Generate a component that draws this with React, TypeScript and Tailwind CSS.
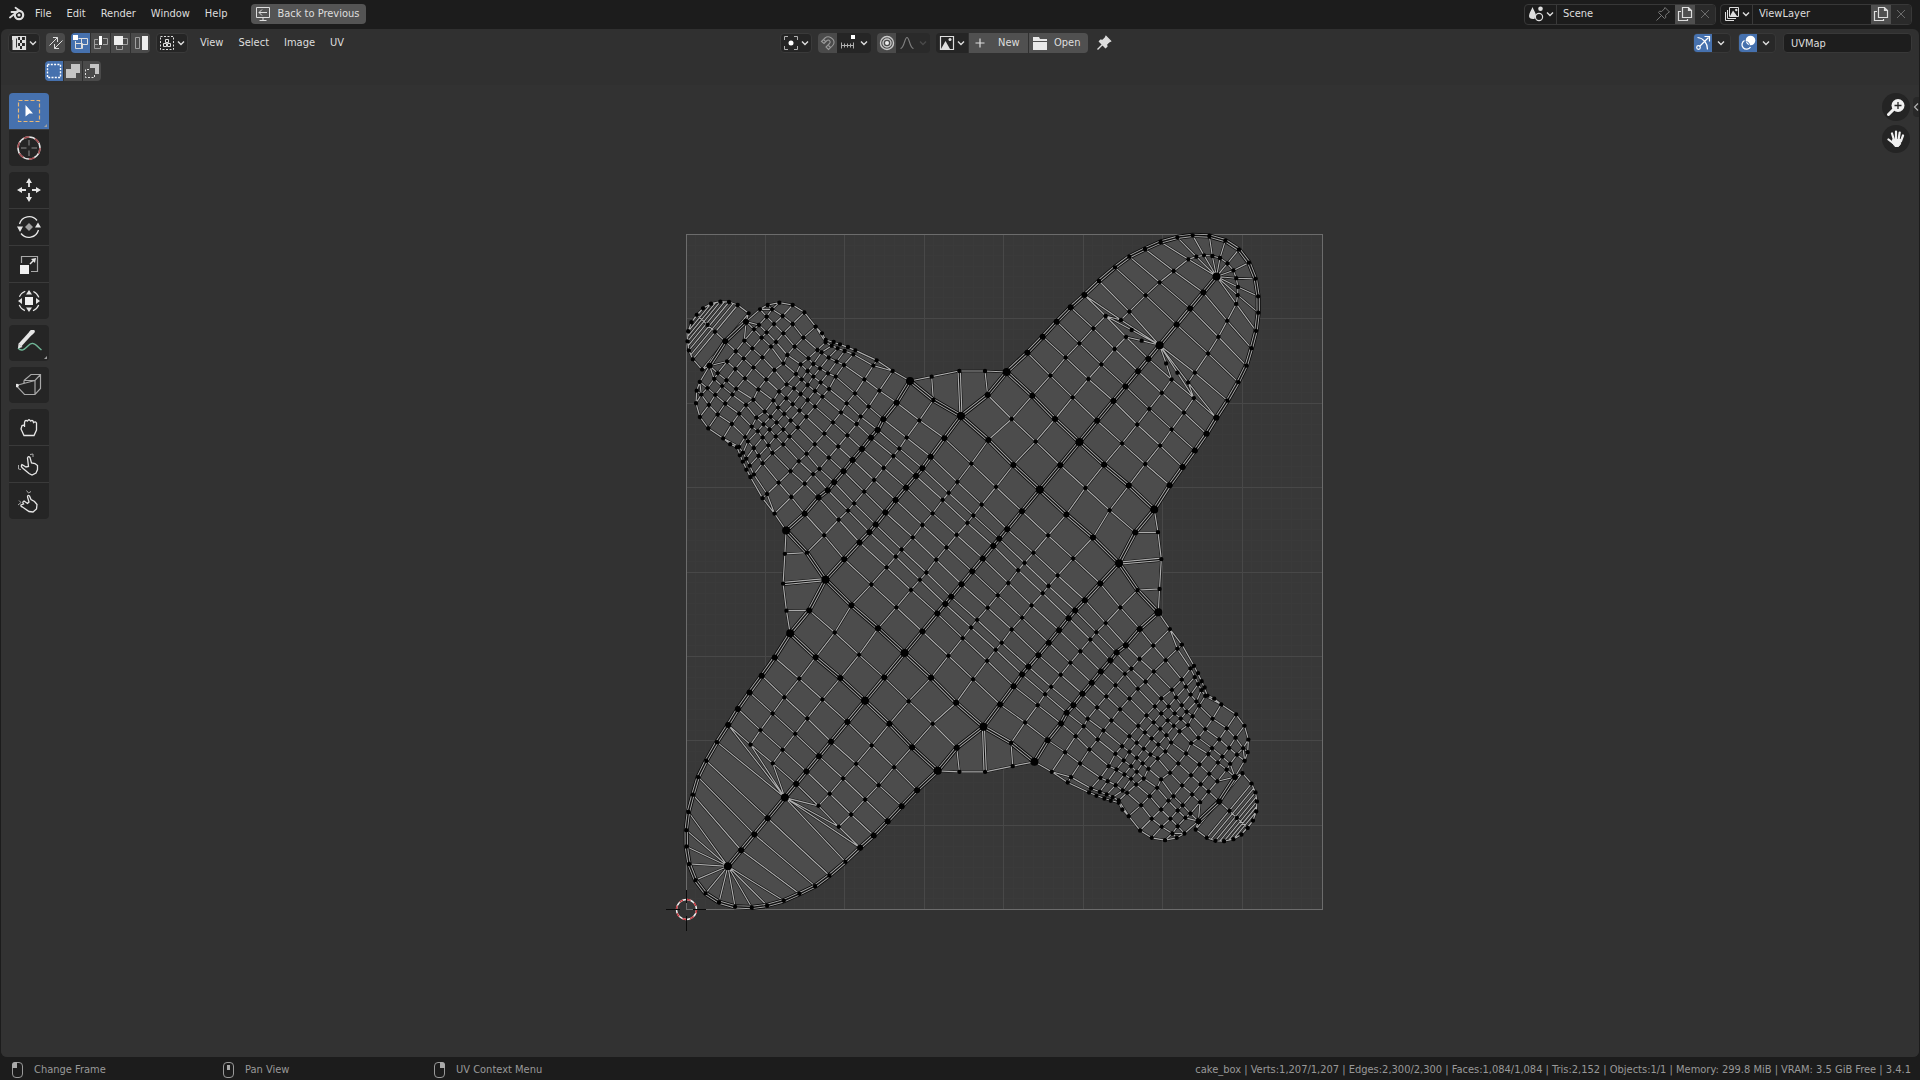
import type { ReactNode } from "react";

type Point = [number, number];

/* ---------- UV mesh ---------- */

// The layout mirrors around two skewed axes, so only one quarter is listed.
const CENTER: Point = [906.6, 1054.2];
const AXIS_A: Point = [-372, -346.5];
const AXIS_B: Point = [372, -449];

// columns running across the short arm, from the center out to the ear
const columns: Point[][] = [
  [[906, 1054], [941, 1018], [970, 978], [988, 957], [1012, 928], [1056, 874], [1108, 808]],
  [[829, 983], [860, 945], [892, 909], [910, 886], [935, 854], [978, 801], [1030, 735]],
  [[757, 915], [788, 880], [818, 840], [836, 819], [862, 786], [904, 731], [955, 660]],
  [[677, 840], [708, 803], [738, 768], [757, 745], [782, 710], [823, 655], [873, 588]],
  [[612, 780], [641, 744], [670, 708], [688, 686], [710, 653], [748, 601], [790, 540]],
  [[548, 720], [576, 687], [603, 653], [623, 630], [640, 598], [680, 548], [720, 483]],
  [[504, 680], [532, 646], [560, 612], [572, 590], [596, 560], [628, 512], [668, 453]],
  [[463, 641], [489, 607], [513, 577], [530, 550], [555, 520], [583, 478], [610, 437]],
  [[408, 591], [435, 560], [457, 530], [477, 507], [497, 470], [522, 435], [550, 403]],
  [[388, 572], [413, 540], [435, 513], [452, 487], [474, 460], [500, 425], [524, 393]],
  [[368, 553], [392, 522], [413, 495], [430, 470], [450, 445], [476, 413], [503, 385]],
  [[348, 535], [372, 505], [395, 478], [413, 453], [430, 432], [455, 397], [485, 377]],
  [[326, 516], [350, 493], [378, 462], [392, 433], [415, 415], [442, 390], [467, 367]],
  [[288, 479], [313, 450], [340, 430], [352, 405], [374, 380], [400, 353], [437, 320]],
  [[250, 443], [277, 412], [303, 380], [318, 366], [340, 340], [368, 312], [403, 277]],
  [[221, 416], [247, 385], [275, 353], [290, 337], [312, 312], [338, 288], [368, 255]],
  [[198, 393], [223, 362], [252, 328], [267, 315], [290, 290], [306, 268], [328, 248]],
];

// rows of the long arm, from its axis to its outer edge
const armRows: Point[][] = [
  [[1108, 808], [1030, 735], [955, 660], [873, 588]],
  [[1170, 735], [1097, 665], [1025, 597], [953, 525]],
  [[1227, 665], [1155, 597], [1087, 527], [1010, 456]],
  [[1281, 602], [1208, 532], [1141, 467], [1072, 398]],
  [[1330, 543], [1255, 477], [1187, 413], [1118, 350]],
  [[1365, 498], [1294, 433], [1228, 370], [1160, 305]],
  [[1403, 453], [1334, 387], [1270, 325], [1202, 262]],
  [[1433, 415], [1368, 351], [1307, 288], [1243, 225]],
];

const earHub: Point = [228, 305];
const earEdge: Point[] = [[236, 280], [203, 255], [177, 246], [151, 245], [123, 251], [99, 265], [80, 285]];
const earMids: Point[] = [[190, 250], [164, 245], [137, 248]];
const earAxis: Point[] = [[198, 393], [165, 365], [135, 335], [110, 318], [80, 285]];

const armHub: Point = [1468, 375];
const armTip: Point = [1638, 168];
const armAxis: Point[] = [armHub, [1518, 312], [1560, 265], [1597, 215], armTip];
const armOuter: Point[] = [
  [1287, 183], [1335, 142], [1378, 110], [1425, 87], [1472, 66], [1522, 52], [1568, 46], [1618, 48], [1666, 62],
  [1705, 87],
];
const armRing: Point[] = [
  [1378, 275], [1427, 226], [1469, 187], [1511, 153], [1555, 118], [1579, 110], [1602, 106], [1627, 108],
  [1650, 114], [1670, 128],
];
const armFan: Point[] = [[1353, 300], [1385, 330], [1415, 362]];
const web: Point[] = [[720, 483], [785, 470], [868, 453], [945, 453], [1010, 456]];

// points this close to an axis belong on it
const snap = (n: number) => (Math.abs(n) < 0.03 ? 0 : n);

const mirror = ([x, y]: Point, flipA: boolean, flipB: boolean): Point => {
  const dx = x - CENTER[0];
  const dy = y - CENTER[1];
  const det = AXIS_A[0] * AXIS_B[1] - AXIS_B[0] * AXIS_A[1];
  const s = snap((dx * AXIS_B[1] - AXIS_B[0] * dy) / det) * (flipA ? -1 : 1);
  const t = snap((AXIS_A[0] * dy - dx * AXIS_A[1]) / det) * (flipB ? -1 : 1);
  return [
    CENTER[0] + s * AXIS_A[0] + t * AXIS_B[0],
    CENTER[1] + s * AXIS_A[1] + t * AXIS_B[1],
  ];
};

const toPath = (points: Point[]) => "M" + points.map(([x, y]) => `${x.toFixed(1)} ${y.toFixed(1)}`).join("L");

const last = <T,>(list: T[]) => list[list.length - 1];

const buildMesh = () => {
  const edges: string[] = [];
  const seams: string[] = [];
  const dots: string[] = [];
  const bigDots: string[] = [];
  const faces: string[] = [];

  for (const flipA of [false, true]) {
    for (const flipB of [false, true]) {
      const m = (p: Point) => mirror(p, flipA, flipB);
      const edge = (...p: Point[]) => edges.push(toPath(p.map(m)));
      const seam = (...p: Point[]) => seams.push(toPath(p.map(m)));
      const dot = (...p: Point[]) => p.forEach((q) => dots.push(toPath([m(q)]) + "h.1"));
      const big = (...p: Point[]) => p.forEach((q) => bigDots.push(toPath([m(q)]) + "h.1"));

      // short arm
      columns.forEach((col, i) => {
        if (i === 0 || i === 3 || i === 5) {
          seam(...col);
          big(...col);
        } else {
          edge(...col);
          dot(...col);
        }
      });
      for (let t = 0; t < 7; t++) {
        edge(...columns.map((col) => col[t]));
      }
      seam(...columns.slice(0, 4).map((col) => col[6]));
      seam(columns[3][6], columns[4][6], columns[5][6]);
      edge([610, 437], [620, 421], [668, 453]);
      edge([620, 421], [556, 391], [510, 373], [467, 360], [456, 340], [437, 320]);
      dot([620, 421], [556, 391], [534, 381], [510, 373], [491, 366], [467, 360], [456, 340]);

      // ear
      edge([223, 362], earHub, [252, 328]);
      edge(earHub, [267, 315]);
      edge([328, 248], [293, 255], [270, 268], earHub, earEdge[0]);
      edge([290, 290], [270, 268], [306, 268], [338, 288]);
      edge([293, 255], [306, 268]);
      dot([293, 255], [270, 268]);
      edge(...earEdge);
      edge(...earAxis);
      dot(...earEdge, ...earAxis.slice(2));
      big(earHub, earAxis[1]);
      seam(earHub, earAxis[1]);
      [...earEdge.slice(0, -1), ...earMids].forEach((p) => edge(p, mirror(p, false, true)));

      // web between the arms
      edge(...web);
      edge([785, 470], [790, 540]);
      edge([864, 453], [870, 588]);
      edge([871, 453], [876, 588]);
      edge([945, 453], [953, 525]);
      dot(...web.slice(1, 4));
      big(web[0], web[4]);

      // long arm
      armRows.forEach((row, i) => {
        if (i === 0 || i === 2) {
          seam(...row);
          big(...row);
        } else {
          edge(...row);
          dot(...row);
          big(row[0], row[3]);
        }
      });
      for (let s = 1; s < 3; s++) edge(...armRows.map((row) => row[s]));
      seam(...armRows.map((row) => row[0]), ...armAxis);
      seam(...armRows.slice(0, 3).map((row) => row[3]));
      const tipEdge = [...armRows.slice(2).map((row) => row[3]), ...armOuter];
      seam(...tipEdge);
      dot(...armOuter);
      big(...armAxis.slice(1));

      const [, near, far, outer] = last(armRows);
      if (!flipB) {
        edge(outer, armFan[0], armHub);
        edge(far, armFan[1], armHub);
        edge(near, armFan[2], armHub);
        edge(far, armFan[0]);
        edge(armOuter[0], armRing[0], armHub);
        edge(armFan[0], ...armRing);
        armRing.forEach((p, i) => {
          edge(p, armOuter[i]);
          edge(p, i < 4 ? armAxis[i] : armTip);
        });
        dot(...armFan, ...armRing);
      } else {
        edge(outer, armHub, far);
        edge(near, armHub);
        armOuter.forEach((p, i) => edge(p, i < 4 ? armAxis[i] : armTip));
      }

      const outline: Point[] = [
        CENTER,
        ...[...earEdge].reverse(),
        earHub,
        [270, 268],
        [293, 255],
        [328, 248],
        [368, 255],
        [403, 277],
        [437, 320],
        [467, 360],
        [620, 421],
        ...web,
        ...tipEdge,
      ];
      faces.push(toPath(outline.map(m)) + "Z");
    }
  }

  const hubs = [armHub, armTip, armRows[0][0], armRows[2][0], armRows[0][3], armRows[2][3], web[0]];
  const hubDots = [false, true].flatMap((a) =>
    [false, true].flatMap((b) => hubs.map((p) => toPath([mirror(p, a, b)]) + "h.1")),
  );

  return {
    edges: edges.join(""),
    seams: seams.join(""),
    dots: dots.join(""),
    bigDots: bigDots.join(""),
    hubDots: hubDots.join(""),
    faces: faces.join(""),
  };
};

const mesh = buildMesh();

const gridLines = (count: number) =>
  Array.from({ length: count - 1 }, (_, i) => {
    const x = 685 + Math.round(((i + 1) * 636) / count);
    const y = 234 + Math.round(((i + 1) * 675) / count);
    return `M${x}.5 234V909M686 ${y}.5H1322`;
  }).join("");

const UvCanvas = () => (
  <svg
    viewBox="1 85 1918 972"
    className="absolute inset-0 w-full h-full"
    role="img"
    aria-label="UV layout of cake_box"
    fill="none"
  >
    <rect x="686" y="234" width="636" height="675" fill="#383838" />
    <path d={gridLines(64)} stroke="#3a3a3a" />
    <path d={gridLines(8)} stroke="#484848" />
    <rect x="686.5" y="234.5" width="636" height="675" stroke="#6c6c6c" />
    <g transform="translate(670 220) scale(0.33333)" strokeLinejoin="round">
      <path d={mesh.faces} fill="#4c4c4c" stroke="#4c4c4c" strokeWidth="2" />
      <path d={mesh.edges} stroke="#0c0c0c" strokeWidth="7" />
      <path d={mesh.edges} stroke="#acacac" strokeWidth="3.6" />
      <path d={mesh.seams} stroke="#080808" strokeWidth="15" />
      <path d={mesh.seams} stroke="#a8a8a8" strokeWidth="10" />
      <path d={mesh.seams} stroke="#101010" strokeWidth="4.4" />
      <g stroke="#020202" strokeLinecap="round">
        <path d={mesh.dots} strokeWidth="13" />
        <path d={mesh.bigDots} strokeWidth="18" />
        <path d={mesh.hubDots} strokeWidth="24" />
      </g>
    </g>
    <circle cx="686.5" cy="909.5" r="10" stroke="#f0f0f0" strokeWidth="1.4" />
    <circle cx="686.5" cy="909.5" r="10" stroke="#c8343c" strokeWidth="1.4" strokeDasharray="3.93 3.93" />
    <path d="M666 909.5H680M693 909.5H706M686.5 890V903M686.5 916V931" stroke="#0a0a0a" />
  </svg>
);

/* ---------- icons ---------- */

const Icon = ({ children }: { children: ReactNode }) => (
  <svg viewBox="0 0 16 16" fill="none" stroke="currentColor" className="size-4 shrink-0" aria-hidden="true">
    {children}
  </svg>
);

const Chevron = () => (
  <svg viewBox="0 0 8 8" fill="none" stroke="currentColor" strokeWidth="1.4" className="size-2 shrink-0" aria-hidden="true">
    <path d="M1 2.5 4 5.5 7 2.5" />
  </svg>
);

const BlenderIcon = () => (
  <Icon>
    <circle cx="10" cy="9" r="4.2" strokeWidth="2.2" />
    <circle cx="10" cy="9" r="1.6" fill="currentColor" stroke="none" />
    <path d="M1 11.5 9 5.2M2.5 6H8.5M6.5 1.8 11.5 5.2" strokeWidth="1.8" strokeLinecap="round" />
  </Icon>
);

const BackIcon = () => (
  <Icon>
    <path d="M1.5 1.5H14.5V11.5H1.5ZM8 11.5V14M4.5 14.5H11.5M4 6.5H12M7 3.5 4 6.5 7 9.5" />
  </Icon>
);

const UvEditorIcon = () => (
  <Icon>
    <path d="M1 1H7V3.5H5V12.5H7V15H1.5V5H1Z" fill="currentColor" stroke="none" />
    <path d="M6.5 1.5H14.5V14.5H6.5Z" strokeWidth="1.2" />
    <path
      d="M9 2H11V5H9ZM11 5H14V8H11ZM7 5H9V8H7ZM9 8H11V11H9ZM11 11H14V14H11ZM7 11H9V14H7Z"
      fill="currentColor"
      stroke="none"
    />
  </Icon>
);

const SyncIcon = () => (
  <Icon>
    <path d="M1.5 10.5 9.5 2.5M5 2.5H9.5V7M14.5 5.5 6.5 13.5M6.5 9V13.5H11" />
  </Icon>
);

const VertexIcon = () => (
  <Icon>
    <path d="M5.5 3.5H14.5V9.5H9.5M8.5 3.5V13.5H2.5V6M2.5 8.5H9.5V13.5H8.5" />
    <path d="M0 0H5V5H0Z" fill="#fff" stroke="none" />
  </Icon>
);

const EdgeIcon = () => (
  <Icon>
    <path d="M5 4.5H1.5V13.5H7.5V11M10 3.5H14.5V9.5H10M1.5 9.5H5" stroke="#a0a0a0" />
    <path d="M6 1H9V10H6Z" fill="#fff" stroke="none" />
  </Icon>
);

const FaceIcon = () => (
  <Icon>
    <path d="M10 3.5H14.5V9.5H10M3.5 11V14.5H9.5V11" stroke="#a0a0a0" />
    <path d="M1 1H10V10H1Z" fill="#eee" stroke="none" />
  </Icon>
);

const IslandIcon = () => (
  <Icon>
    <path d="M2.5 2.5H6.5V13.5H2.5Z" stroke="#a0a0a0" />
    <path d="M9 1H15V15H9Z" fill="#eee" stroke="none" />
  </Icon>
);

const StickyIcon = () => (
  <Icon>
    <path d="M1.5 1.5H14.5V14.5H1.5Z" strokeDasharray="2 1.5" />
    <path d="M6.5 4.5H9.5V7.5H6.5ZM4.5 8.5H7.5V11.5H4.5ZM8.5 8.5H11.5V11.5H8.5Z" />
  </Icon>
);

const NewSetIcon = () => (
  <Icon>
    <path d="M1.5 1.5H14.5V14.5H1.5Z" stroke="#fff" strokeWidth="1.4" strokeDasharray="2 1.3" />
  </Icon>
);

const ExtendIcon = () => (
  <Icon>
    <path d="M6 1H15V10H11V15H1V6H6Z" fill="#c4c4c4" stroke="none" />
  </Icon>
);

const SubtractIcon = () => (
  <Icon>
    <path d="M6 1H15V11H11V5H6Z" fill="#c4c4c4" stroke="none" />
    <path d="M5 6.5H1.5V14.5H10.5V11" strokeDasharray="2 1.5" />
  </Icon>
);

const PivotIcon = () => (
  <Icon>
    <path d="M5 1.5H1.5V5M11 1.5H14.5V5M5 14.5H1.5V11M11 14.5H14.5V11" stroke="#b0b0b0" />
    <circle cx="8" cy="8" r="2.5" fill="#fff" stroke="none" />
  </Icon>
);

const MagnetIcon = () => (
  <Icon>
    <path
      d="M1.5 6.5 5 3C8.500 0 14.500 3.500 14 8 13.500 10.500 11 12.500 8.500 14.500L6 12 9.500 8.500C11.500 6.500 8.500 4 7 5.500L4 8.500ZM3.500 4.500 6 7M8 10 10.500 12.500"
      stroke="#999"
      strokeWidth="1.1"
    />
  </Icon>
);

const IncrementIcon = () => (
  <Icon>
    <path
      d="M1 10.5H13M1.5 7.5V13.5M4.5 8.5V12.5M7.5 8.5V12.5M10.5 8.5V12.5M13.5 7.5V13.5"
      stroke="#b0b0b0"
    />
    <path d="M11 0H15V4H11Z" fill="#fff" stroke="none" />
  </Icon>
);

const ProportionalIcon = () => (
  <Icon>
    <circle cx="8" cy="8" r="6.5" stroke="#c8c8c8" strokeWidth="1.4" />
    <circle cx="8" cy="8" r="4" stroke="#c8c8c8" strokeWidth="1.4" />
    <circle cx="8" cy="8" r="2" fill="#eee" stroke="none" />
  </Icon>
);

const FalloffIcon = () => (
  <Icon>
    <path d="M1.5 13.5C5.5 13 5.5 2.5 8 2.5S10.5 13 14.5 13.5" stroke="#808080" strokeWidth="1.2" />
  </Icon>
);

const ImageIcon = () => (
  <Icon>
    <path d="M1.5 1.5H14.5V14.5H1.5Z" strokeWidth="1.2" />
    <path d="M2 14 6.5 6 11 14Z" fill="currentColor" stroke="none" />
    <circle cx="11" cy="4.5" r="1.5" fill="currentColor" stroke="none" />
  </Icon>
);

const PlusIcon = () => (
  <Icon>
    <path d="M8 3.5V12.5M3.5 8H12.5" strokeWidth="1.2" />
  </Icon>
);

const FolderIcon = () => (
  <Icon>
    <path d="M1 2H7L8 4H15V6H1ZM1 7H15V15H1Z" fill="#e8e8e8" stroke="none" />
  </Icon>
);

const PinIcon = ({ filled = false }: { filled?: boolean }) => (
  <Icon>
    <path
      d="M10 1.5 14.5 6 13 6.8 10.5 9.3 10.8 11.5 9.5 12.5 3.5 6.5 4.5 5.2 6.7 5.5 9.2 3ZM6 10 1.5 14.5"
      fill={filled ? "currentColor" : "none"}
      strokeWidth={filled ? 1.4 : 1}
    />
  </Icon>
);

const SceneIcon = () => (
  <Icon>
    <path
      d="M4.5 1C5.5 4 8 7 8 10 7 11 6.5 12 6.5 13 3 13.5 1 12 1 10 1 7 3.5 4 4.5 1Z"
      fill="currentColor"
      stroke="none"
    />
    <circle cx="12.5" cy="2.8" r="2.3" fill="currentColor" stroke="none" />
    <circle cx="11" cy="11" r="3.6" strokeWidth="1.2" />
  </Icon>
);

const LayersIcon = () => (
  <Icon>
    <path d="M1.5 6V14.5H10M3.5 4V12.5H12M5.5 1.5H14.5V10.5H5.5Z" />
    <path d="M6 10 9 4.5 13 10Z" fill="currentColor" stroke="none" />
    <circle cx="12.3" cy="4" r="1.2" fill="currentColor" stroke="none" />
  </Icon>
);

const DuplicateIcon = () => (
  <Icon>
    <path
      d="M5.5 1.5H11.5L14.5 4.5V11.5H5.5ZM11.5 1.5V4.5H14.5M4 5.5H1.5V14.5H10.5V13"
      strokeWidth="1.2"
    />
  </Icon>
);

const CloseIcon = () => (
  <Icon>
    <path d="M4 4 12 12M12 4 4 12" stroke="#6c6c6c" />
  </Icon>
);

const GizmoIcon = () => (
  <Icon>
    <path
      d="M2.5 2.5C8.5 3 12.5 8 12.5 14.5M4.5 11.5 13.5 2.5M9.5 1.5H14.5V6.5"
      stroke="#fff"
      strokeWidth="1.2"
    />
    <circle cx="3.5" cy="12.5" r="1.8" stroke="#fff" strokeWidth="1.2" />
  </Icon>
);

const OverlayIcon = () => (
  <Icon>
    <circle cx="10.5" cy="5.5" r="4.8" fill="#fff" stroke="none" />
    <path d="M4.500 5.500A4.600 4.600 0 1 0 10.500 12" stroke="#fff" strokeWidth="1.3" />
    <path d="M6.500 6.500A4 4 0 0 1 9.500 10" stroke="#4671ae" />
  </Icon>
);

const MouseIcon = ({ pressed }: { pressed: "left" | "middle" | "right" }) => (
  <svg viewBox="0 0 11 16" className="w-[11px] h-4 shrink-0" fill="none" stroke="#999" aria-hidden="true">
    <rect x=".5" y=".5" width="10" height="15" rx="3.5" />
    {pressed === "left" && <path d="M0 6V3Q0 0 3 0H5V6Z" fill="#aaa" stroke="none" />}
    {pressed === "middle" && <path d="M4 3H7V8H4Z" fill="#aaa" stroke="none" />}
    {pressed === "right" && <path d="M11 6V3Q11 0 8 0H6V6Z" fill="#aaa" stroke="none" />}
  </svg>
);

/* ---------- toolbar ---------- */

const toolIcon = (children: ReactNode) => (
  <svg viewBox="0 0 26 26" fill="none" stroke="#e6e6e6" className="size-[26px]" aria-hidden="true">
    {children}
  </svg>
);

const toolGroups = [
  [
    {
      name: "Select Box",
      active: true,
      more: true,
      icon: toolIcon(
        <>
          <path d="M2.5 2.5H23.5V23.5H2.5Z" stroke="#e8b878" strokeDasharray="4 2" strokeWidth="1.2" />
          <path d="M9.5 7 17 15.5 13.3 15.5 9.5 18.5Z" fill="#fff" stroke="none" />
        </>,
      ),
    },
    {
      name: "Cursor",
      icon: toolIcon(
        <>
          <circle cx="13" cy="13" r="11" strokeWidth="1.5" />
          <circle cx="13" cy="13" r="11" stroke="#a0484c" strokeWidth="1.5" strokeDasharray="5.76 5.76" />
          <path d="M13 5V10.5M13 15.5V21M5 13H10.5M15.5 13H21" stroke="#8c8c8c" />
        </>,
      ),
    },
  ],
  [
    {
      name: "Move",
      icon: toolIcon(
        <>
          <path d="M13 6V10M13 16V20M6 13H10M16 13H20" strokeWidth="1.8" />
          <path d="M13 1 16 6H10ZM13 25 16 20H10ZM1 13 6 10V16ZM25 13 20 10V16Z" fill="#e6e6e6" stroke="none" />
        </>,
      ),
    },
    {
      name: "Rotate",
      icon: toolIcon(
        <>
          <path d="M3.5 10A10 10 0 0 1 21 6.5M22.5 16A10 10 0 0 1 5 19.5" strokeWidth="1.3" />
          <path d="M4 18 1 12.5H7ZM22 8.5 25 13.5H19Z" fill="#e6e6e6" stroke="none" />
          <path d="M13 9 17 13 13 17 9 13Z" fill="#a0a0a0" stroke="none" />
        </>,
      ),
    },
    {
      name: "Scale",
      icon: toolIcon(
        <>
          <path d="M5.5 12V5.5H21.5V20.5H15" stroke="#a8a8a8" strokeWidth="1.2" />
          <path d="M14 13 18 9" strokeWidth="1.4" />
          <path d="M20 7 19 12 15 8Z" fill="#e6e6e6" stroke="none" />
          <path d="M4 14H13V23H4Z" fill="#f0f0f0" stroke="none" />
        </>,
      ),
    },
    {
      name: "Transform",
      icon: toolIcon(
        <>
          <circle cx="13" cy="13" r="10.5" strokeWidth="1.2" strokeDasharray="8.25 8.25" strokeDashoffset="-4.1" />
          <path d="M9 9H17V17H9Z" fill="#f0f0f0" stroke="none" />
          <path d="M13 2 16 6.5H10ZM13 24 16 19.5H10ZM2 13 6 10V16ZM24 13 20 10V16Z" fill="#e6e6e6" stroke="none" />
        </>,
      ),
    },
  ],
  [
    {
      name: "Annotate",
      more: true,
      icon: toolIcon(
        <>
          <path d="M2 18C8 25 12 12 17 13.5 20 14 22 17 25.5 20" stroke="#6fb596" strokeWidth="1.4" />
          <path d="M4 15 14 4" strokeWidth="4" />
          <path d="M15 3 16.5 1.5" strokeWidth="4.5" strokeLinecap="round" />
          <path d="M2 18.5 2.5 13.5 6.5 17Z" fill="#e6e6e6" stroke="none" />
        </>,
      ),
    },
  ],
  [
    {
      name: "Rip Region",
      icon: toolIcon(
        <>
          <path
            d="M8 8.5 15 2.5H24.5V16.5L19 22.5H8.5L0 13.5 19 8.5V22.5M8 8.5H19L24.5 2.5M8 8.5V11"
            stroke="#a8a8a8"
            strokeWidth="1.2"
          />
          <circle cx="1" cy="13.5" r="1.8" fill="#e6e6e6" stroke="none" />
        </>,
      ),
    },
  ],
  [
    {
      name: "Grab",
      icon: toolIcon(
        <path
          d="M8 21.5H18L20.5 16V9Q19.5 7 17.5 8.5 17 5.5 14.5 7 13 4.5 11.5 7 9 5.5 8.5 8.5V11L6 11.5 5 15ZM8.5 8.5V13"
          strokeWidth="1.3"
        />,
      ),
    },
    {
      name: "Relax",
      icon: toolIcon(
        <>
          <path
            d="M6 13.5Q4.500 15.500 6.500 17L13 22.500 16 24 20 22 21.500 18.500V14.500L19 12.500 15.500 12 14 6.500Q12.500 4.500 11.500 7L12.500 15.500 10 16Z"
            strokeWidth="1.3"
          />
          <path d="M14 3.5 17 3V6M2.5 14V18L5 18.5" stroke="#a8a8a8" />
        </>,
      ),
    },
    {
      name: "Pinch",
      icon: toolIcon(
        <>
          <path
            d="M8 13Q6 14 7.500 16L5 17Q4.500 18.500 6.500 19L13 23.500 17 24 20.500 21 21 16.500 18.500 13.500 15 11.500 13.500 8Q11.500 6.500 11.500 9L13 14 11.500 15.500Z"
            strokeWidth="1.3"
          />
          <path d="M10.5 2.5 12.5 5 15 3.5M3 12.5 5 14.5 2 17" stroke="#a8a8a8" />
        </>,
      ),
    },
  ],
];

const Toolbar = () => (
  <div className="flex flex-col gap-1.5 p-2">
    {toolGroups.map((group, i) => (
      <div key={i} className="flex flex-col gap-px w-10 rounded-sm overflow-hidden bg-[#3a3a3a]">
        {group.map((tool: { name: string; icon: ReactNode; active?: boolean; more?: boolean }) => (
          <button
            key={tool.name}
            title={tool.name}
            aria-label={tool.name}
            className={`relative h-9 flex items-center justify-center ${tool.active ? "bg-[#4671ae]" : "bg-[#252525]"}`}
          >
            {tool.icon}
            {tool.more && (
              <svg viewBox="0 0 3 3" className="absolute right-0.5 bottom-0.5 size-[3px]" aria-hidden="true">
                <path d="M3 0V3H0Z" fill="#a0a0a0" />
              </svg>
            )}
          </button>
        ))}
      </div>
    ))}
  </div>
);

/* ---------- bars ---------- */

const dropdown = "h-5 flex items-center gap-0.5 px-0.5 rounded-sm bg-[#252525] border border-[#3a3a3a]";
const cell = "h-5 flex items-center justify-center w-[19px] bg-[#4a4a4a]";
const darkCell = "h-full flex items-center gap-0.5 pl-[3px] pr-0.5 border-r border-[#3a3a3a]";

const DataBlock = ({ label, icon, pinned }: { label: string; icon: ReactNode; pinned?: boolean }) => (
  <div className="h-[21px] w-48 flex items-center rounded-sm overflow-hidden bg-[#1c1c1c] border border-[#383838]">
    <button className={darkCell} aria-label={`Browse ${label}`}>
      {icon}
      <Chevron />
    </button>
    <input aria-label={label} defaultValue={label} className="min-w-0 flex-1 pl-1.5 bg-transparent outline-none" />
    {pinned && (
      <button className="px-1 text-[#777]" aria-label="Pin scene">
        <PinIcon />
      </button>
    )}
    <button className="h-full w-5 flex items-center justify-center bg-[#4f4f4f]" aria-label={`New ${label}`}>
      <DuplicateIcon />
    </button>
    <button className="h-full w-5 flex items-center justify-center bg-[#2a2a2a]" aria-label={`Remove ${label}`}>
      <CloseIcon />
    </button>
  </div>
);

const TopBar = () => (
  <header className="h-7 shrink-0 flex items-center justify-between pl-[9px] pr-2">
    <nav className="flex items-center">
      <button aria-label="Blender" className="mr-[10px]">
        <BlenderIcon />
      </button>
      <div className="flex gap-[15px]">
        {["File", "Edit", "Render", "Window", "Help"].map((item) => (
          <button key={item}>{item}</button>
        ))}
      </div>
      <button className="ml-6 h-5 flex items-center gap-1.5 px-1 w-[115px] whitespace-nowrap rounded-sm bg-[#545454]">
        <BackIcon />
        Back to Previous
      </button>
    </nav>
    <div className="flex gap-1">
      <DataBlock label="Scene" icon={<SceneIcon />} pinned />
      <DataBlock label="ViewLayer" icon={<LayersIcon />} />
    </div>
  </header>
);

const EditorHeader = () => (
  <div className="h-7 grid grid-cols-[1fr_auto_1fr] items-center px-[7px]">
    <div className="flex items-center">
      <button className={dropdown} aria-label="Editor type">
        <UvEditorIcon />
        <Chevron />
      </button>
      <button className={`${cell} rounded-sm ml-1.5`} aria-label="Sync selection">
        <SyncIcon />
      </button>
      <div className="flex gap-px ml-1.5 rounded-sm overflow-hidden">
        <button className="h-5 flex items-center justify-center w-[19px] bg-[#4671ae]" aria-label="Vertex">
          <VertexIcon />
        </button>
        <button className={cell} aria-label="Edge">
          <EdgeIcon />
        </button>
        <button className={cell} aria-label="Face">
          <FaceIcon />
        </button>
        <button className={cell} aria-label="Island">
          <IslandIcon />
        </button>
      </div>
      <button className={`${dropdown} ml-1.5 mr-3`} aria-label="Sticky selection mode">
        <StickyIcon />
        <Chevron />
      </button>
      <nav className="flex gap-[15px]">
        {["View", "Select", "Image", "UV"].map((item) => (
          <button key={item}>{item}</button>
        ))}
      </nav>
    </div>

    <div className="flex items-center pr-7">
      <button className={dropdown} aria-label="Pivot point">
        <PivotIcon />
        <Chevron />
      </button>
      <div className="flex ml-1.5 h-5 rounded-sm overflow-hidden bg-[#252525]">
        <button className={cell} aria-label="Snap">
          <MagnetIcon />
        </button>
        <button className="flex items-center gap-1 px-[3px]" aria-label="Snapping">
          <IncrementIcon />
          <Chevron />
        </button>
      </div>
      <div className="flex ml-1.5 h-5 rounded-sm overflow-hidden bg-[#2a2a2a]">
        <button className={cell} aria-label="Proportional editing">
          <ProportionalIcon />
        </button>
        <button className="flex items-center gap-1 px-[3px] text-[#4a4a4a]" aria-label="Falloff">
          <FalloffIcon />
          <Chevron />
        </button>
      </div>
      <div className="flex gap-px ml-1.5 h-5 rounded-sm overflow-hidden">
        <button className="flex items-center gap-0.5 px-[3px] bg-[#252525]" aria-label="Browse image">
          <ImageIcon />
          <Chevron />
        </button>
        <button className="flex items-center gap-2.5 pl-[3px] w-[59px] bg-[#505050]">
          <PlusIcon />
          New
        </button>
        <button className="flex items-center gap-1.5 pl-[3px] w-[59px] bg-[#505050]">
          <FolderIcon />
          Open
        </button>
      </div>
      <button className="ml-2" aria-label="Pin">
        <PinIcon filled />
      </button>
    </div>

    <div className="flex items-center justify-end gap-[7px]">
      {[<GizmoIcon key="gizmo" />, <OverlayIcon key="overlay" />].map((icon, i) => (
        <div key={i} className="flex h-5 rounded-sm overflow-hidden border border-[#383838] bg-[#282828]">
          <button className="w-[18px] flex items-center justify-center bg-[#4671ae]" aria-label={i ? "Overlays" : "Gizmos"}>
            {icon}
          </button>
          <button className="w-[18px] flex items-center justify-center" aria-label="Options">
            <Chevron />
          </button>
        </div>
      ))}
      <input
        aria-label="UV map"
        defaultValue="UVMap"
        className="h-5 w-[129px] px-[7px] rounded-sm bg-[#1d1d1d] border border-[#383838] outline-none"
      />
    </div>
  </div>
);

const SelectModes = () => (
  <div className="h-7 flex items-center pl-11">
    <div className="flex gap-px rounded-sm overflow-hidden">
      <button className="h-5 w-[18px] flex items-center justify-center bg-[#4671ae]" aria-label="Set selection">
        <NewSetIcon />
      </button>
      <button className="h-5 w-[18px] flex items-center justify-center bg-[#4a4a4a]" aria-label="Extend selection">
        <ExtendIcon />
      </button>
      <button className="h-5 w-[18px] flex items-center justify-center bg-[#4a4a4a]" aria-label="Subtract selection">
        <SubtractIcon />
      </button>
    </div>
  </div>
);

const ViewGizmos = () => (
  <div className="flex gap-[3px] items-start pt-2">
    <div className="flex flex-col gap-1">
      <button className="size-7 rounded-full bg-[#242424] flex items-center justify-center" aria-label="Zoom">
        <svg viewBox="0 0 18 18" className="size-[18px]" aria-hidden="true">
          <path d="M1.5 16.5 7 11" stroke="#f0f0f0" strokeWidth="3" strokeLinecap="round" />
          <circle cx="11" cy="7.5" r="6.5" fill="#f0f0f0" />
          <path d="M11 4V11M7.5 7.5H14.5" stroke="#242424" strokeWidth="1.3" />
        </svg>
      </button>
      <button className="size-7 rounded-full bg-[#242424] flex items-center justify-center" aria-label="Pan">
        <svg viewBox="0 0 18 18" className="size-[18px]" stroke="#f0f0f0" strokeLinecap="round" aria-hidden="true">
          <path d="M5 3.5 7 10M9 1.5V10M12.7 2.5 11.5 10M16 5.5 14 11M1.5 9.5 6 13" strokeWidth="2.2" />
          <path d="M6 9.5H14L13.5 14 11.5 16.5H8L5.5 13Z" fill="#f0f0f0" strokeLinejoin="round" />
        </svg>
      </button>
    </div>
    <button className="h-5 w-1.5 mt-1 rounded-l-sm bg-[#282828] flex items-center" aria-label="Show sidebar">
      <svg viewBox="0 0 6 10" className="w-1.5 h-2.5" fill="none" stroke="#b0b0b0" strokeWidth="1.2" aria-hidden="true">
        <path d="M5 1.5 1.5 5 5 8.5" />
      </svg>
    </button>
  </div>
);

const hints = [
  { label: "Change Frame", pressed: "left" },
  { label: "Pan View", pressed: "middle" },
  { label: "UV Context Menu", pressed: "right" },
] as const;

const StatusBar = () => (
  <footer className="h-[23px] pt-0.5 shrink-0 flex items-center justify-between pl-3 pr-[9px] text-[#999]">
    <div className="flex">
      {hints.map((hint) => (
        <div key={hint.label} className="flex items-center gap-[11px] w-[211px]">
          <MouseIcon pressed={hint.pressed} />
          {hint.label}
        </div>
      ))}
    </div>
    <p>
      cake_box | Verts:1,207/1,207 | Edges:2,300/2,300 | Faces:1,084/1,084 | Tris:2,152 | Objects:1/1 | Memory: 299.8
      MiB | VRAM: 3.5 GiB Free | 3.4.1
    </p>
  </footer>
);

const App = () => {
  return (
    <div className="h-screen flex flex-col bg-[#1c1c1c] text-[#dedede] text-[11px] leading-4 font-['DejaVu_Sans_Condensed','DejaVu_Sans',sans-serif] select-none">
      <TopBar />
      <section className="flex-1 min-h-0 flex flex-col mx-px mt-px rounded-md overflow-hidden bg-[#303030]">
        <EditorHeader />
        <SelectModes />
        <main className="relative flex-1 min-h-0 bg-[#323232]">
          <UvCanvas />
          <div className="relative flex justify-between">
            <Toolbar />
            <ViewGizmos />
          </div>
        </main>
      </section>
      <StatusBar />
    </div>
  );
};

export default App;
